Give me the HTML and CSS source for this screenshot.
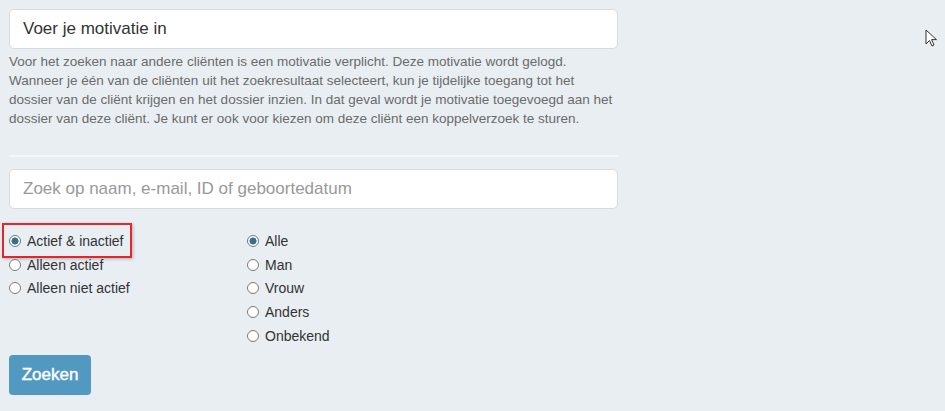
FILE: index.html
```html
<!DOCTYPE html>
<html lang="nl">
<head>
<meta charset="utf-8">
<title>Zoeken</title>
<link rel="stylesheet" href="styles.css">
</head>
<body>
<div class="page">
  <div class="form">
    <input class="field" type="text" placeholder="Voer je motivatie in">
    <p class="help">Voor het zoeken naar andere cliënten is een motivatie verplicht. Deze motivatie wordt gelogd.<br>Wanneer je één van de cliënten uit het zoekresultaat selecteert, kun je tijdelijke toegang tot het<br>dossier van de cliënt krijgen en het dossier inzien. In dat geval wordt je motivatie toegevoegd aan het<br>dossier van deze cliënt. Je kunt er ook voor kiezen om deze cliënt een koppelverzoek te sturen.</p>
    <hr class="sep">
    <input class="field search" type="text" placeholder="Zoek op naam, e-mail, ID of geboortedatum">
    <div class="filters">
      <div class="group status">
        <label class="opt highlighted"><input type="radio" name="status" checked><span>Actief &amp; inactief</span></label>
        <label class="opt"><input type="radio" name="status"><span>Alleen actief</span></label>
        <label class="opt"><input type="radio" name="status"><span>Alleen niet actief</span></label>
      </div>
      <div class="group gender">
        <label class="opt"><input type="radio" name="gender" checked><span>Alle</span></label>
        <label class="opt"><input type="radio" name="gender"><span>Man</span></label>
        <label class="opt"><input type="radio" name="gender"><span>Vrouw</span></label>
        <label class="opt"><input type="radio" name="gender"><span>Anders</span></label>
        <label class="opt"><input type="radio" name="gender"><span>Onbekend</span></label>
      </div>
    </div>
    <button class="btn" type="button">Zoeken</button>
  </div>
</div>
<svg class="cursor" width="14" height="20" viewBox="0 0 14 20" aria-hidden="true">
  <path d="M1 1 L1 15 L4.5 11.5 L7 17 L9 16 L6.6 10.6 L11.5 10.6 Z" fill="#fff" stroke="#333" stroke-width="1" stroke-linejoin="round"/>
</svg>
</body>
</html>
```
FILE: styles.css
```css
html, body {
  margin: 0;
  padding: 0;
  background: #e8eef2;
  height: 100%;
}
body {
  font-family: "Liberation Sans", Arial, sans-serif;
  color: #333;
  position: relative;
  overflow: hidden;
}
.page {
  padding: 9px;
}
.form {
  width: 609px;
  display: flex;
  flex-direction: column;
}
.field {
  box-sizing: border-box;
  width: 609px;
  height: 40px;
  margin: 0;
  padding: 0 13px;
  border: 1px solid #d6dbdf;
  border-radius: 5px;
  background: #fff;
  font-family: inherit;
  font-size: 17px;
  color: #333;
  outline: none;
}
.field::placeholder {
  color: #999;
}
.field:first-child::placeholder {
  color: #333;
}
.help {
  margin: 3px 0 0;
  font-size: 13.5px;
  line-height: 19px;
  color: #6b6b6b;
}
.sep {
  margin: 27px 0 12px;
  border: 0;
  border-top: 2px solid #f4f6f8;
  height: 0;
}
.filters {
  display: flex;
  margin-top: 20px;
}
.group {
  display: flex;
  flex-direction: column;
}
.status {
  width: 238px;
}
.opt {
  display: flex;
  align-items: center;
  height: 23.75px;
  font-size: 14px;
  color: #333;
  position: relative;
}
.opt input {
  appearance: none;
  -webkit-appearance: none;
  box-sizing: border-box;
  width: 12px;
  height: 12px;
  margin: 0 6px 0 0;
  border: 1px solid #7a7a7a;
  border-radius: 50%;
  background: #fff;
}
.opt input:checked {
  border-color: #5a7f93;
  background: radial-gradient(circle, #3d6d85 0 3.3px, #fff 3.8px);
}
.highlighted::before {
  content: "";
  box-sizing: border-box;
  position: absolute;
  left: -7px;
  top: -6px;
  width: 130px;
  height: 35px;
  border: 2px solid #e4262c;
  box-shadow: 1px 1px 3px rgba(0,0,0,0.25);
}
.btn {
  align-self: flex-start;
  margin-top: 7px;
  width: 82px;
  height: 40px;
  border: 0;
  border-radius: 4px;
  background: #5299c2;
  color: #fff;
  font-family: inherit;
  font-size: 17px;
  font-weight: normal;
  -webkit-text-stroke: 0.4px #fff;
  padding: 0;
}
.cursor {
  position: absolute;
  left: 925px;
  top: 29px;
}
```
